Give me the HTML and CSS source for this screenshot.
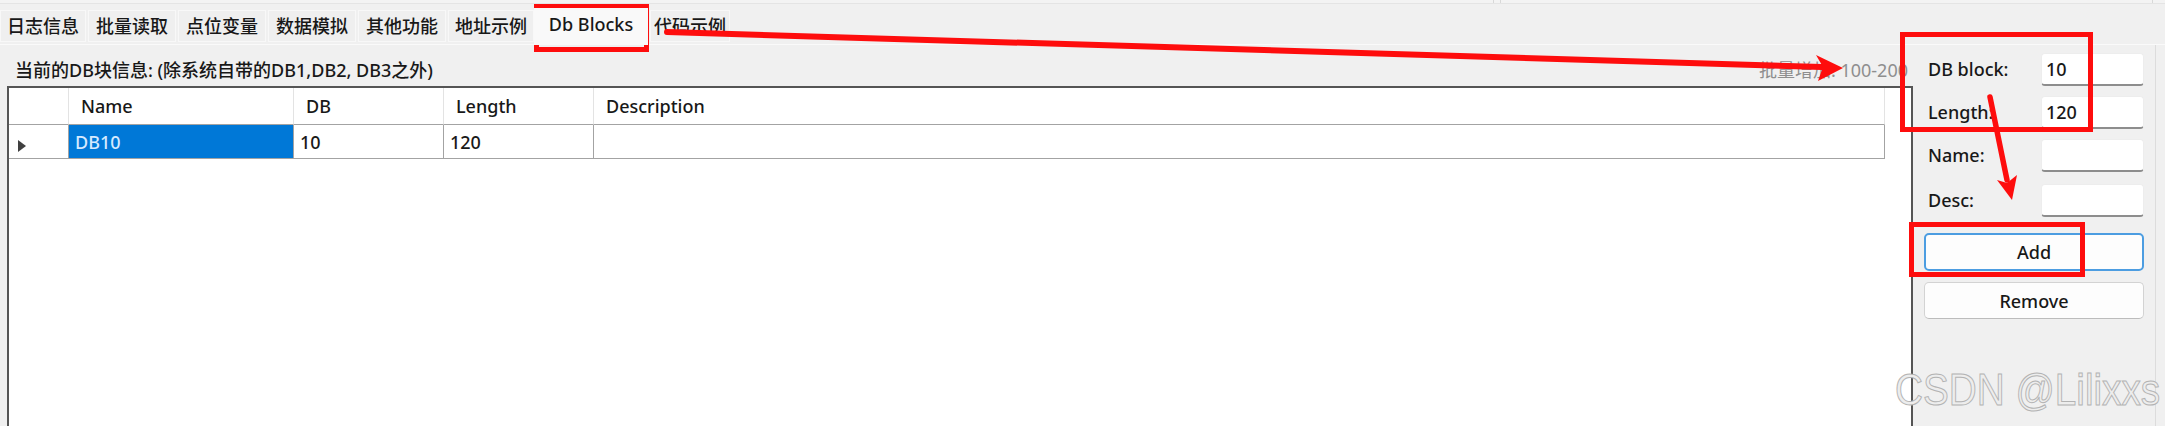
FILE: index.html
```html
<!DOCTYPE html>
<html lang="zh-CN">
<head>
<meta charset="utf-8">
<title>Db Blocks</title>
<link rel="stylesheet" href="styles.css">
</head>
<body>
<div class="app">
  <div class="topstrip"><div class="seg seg-a"></div><div class="seg seg-b"></div></div>
  <div class="tabs">
    <div class="tab t-first">日志信息</div>
    <div class="tab">批量读取</div>
    <div class="tab">点位变量</div>
    <div class="tab">数据模拟</div>
    <div class="tab">其他功能</div>
    <div class="tab t-narrow">地址示例</div>
    <div class="tab active">Db Blocks</div>
    <div class="tab t-last">代码示例</div>
  </div>
  <div class="page">
    <div class="main">
      <div class="caption">
        <span>当前的DB块信息: (除系统自带的DB1,DB2, DB3之外)</span>
        <span class="muted">批量增加: 100-200</span>
      </div>
      <div class="grid">
        <div class="row head">
          <div class="cell rh"></div>
          <div class="cell c-name">Name</div>
          <div class="cell c-db">DB</div>
          <div class="cell c-len">Length</div>
          <div class="cell c-desc">Description</div>
        </div>
        <div class="row data">
          <div class="cell rh"><span class="cur"></span></div>
          <div class="cell c-name sel">DB10</div>
          <div class="cell c-db">10</div>
          <div class="cell c-len">120</div>
          <div class="cell c-desc"></div>
        </div>
      </div>
    </div>
    <div class="side">
      <div class="field"><span class="lbl">DB block:</span><span class="input">10</span></div>
      <div class="field"><span class="lbl">Length:</span><span class="input">120</span></div>
      <div class="field"><span class="lbl">Name:</span><span class="input"></span></div>
      <div class="field f-last"><span class="lbl">Desc:</span><span class="input"></span></div>
      <div class="btn primary">Add</div>
      <div class="btn">Remove</div>
    </div>
    <div class="edge"></div>
  </div>

  <svg class="annot" width="2165" height="426" viewBox="0 0 2165 426" xmlns="http://www.w3.org/2000/svg">
    <g fill="none" stroke="#fe0d0d">
      <rect x="536.5" y="6.5" width="110" height="43" stroke-width="5"/>
      <rect x="1902.5" y="34.5" width="188" height="95" stroke-width="5"/>
      <rect x="1911.5" y="224.5" width="171" height="50" stroke-width="5"/>
      <line x1="667" y1="32" x2="1822" y2="67" stroke-width="6" stroke-linecap="round"/>
      <line x1="1990" y1="97" x2="2007" y2="180" stroke-width="5.5" stroke-linecap="round"/>
    </g>
    <g fill="#fe0d0d">
      <polygon points="1843,68 1816,55 1823,67 1818,81"/>
      <polygon points="2012,200 1997,180 2007,183 2017,175"/>
    </g>
  </svg>

  <div class="watermark">CSDN @Lilixxs</div>
</div>
</body>
</html>
```

FILE: styles.css
```css
html, body {
  margin: 0;
  padding: 0;
}

body {
  width: 2165px;
  height: 426px;
  overflow: hidden;
  background: #f0f0f0;
  font-family: "Noto Sans", "Noto Sans CJK SC", sans-serif;
  font-size: 18px;
  font-weight: 500;
  color: #181818;
}

.app {
  position: relative;
  width: 2165px;
  height: 426px;
  display: flex;
  flex-direction: column;
}

/* ---------- top strip ---------- */
.topstrip {
  height: 3px;
  display: flex;
  border-bottom: 1px solid #e4e4e4;
  background: #f3f3f3;
}

.seg {
  height: 3px;
  box-sizing: border-box;
}

.seg-a {
  width: 1494px;
  border-right: 1px solid #d8d8d8;
}

.seg-b {
  width: 653px;
  margin-left: 6px;
  border-left: 1px solid #d8d8d8;
  border-right: 1px solid #d8d8d8;
}

/* ---------- tabs ---------- */
.tabs {
  height: 40px;
  box-sizing: border-box;
  padding-top: 6px;
  display: flex;
  align-items: flex-start;
  gap: 2px;
}

.tab {
  width: 88px;
  height: 32px;
  line-height: 32px;
  text-align: center;
  background: #efefef;
  box-shadow: inset 0 0 0 1px #f8f8f8;
  white-space: nowrap;
}

.t-first {
  width: 86px;
}

.t-narrow {
  width: 86px;
}

.tab.active {
  position: relative;
  z-index: 1;
  width: 114px;
  height: 37px;
  margin-top: -2px;
  margin-left: -2px;
  padding-bottom: 5px;
  box-sizing: border-box;
  background: #f9f9f9;
  box-shadow: none;
}

.t-last {
  width: 80px;
}

/* ---------- page ---------- */
.page {
  flex: 1;
  min-height: 0;
  display: flex;
  border-top: 1px solid #fafafa;
}

.main {
  width: 1913px;
  flex: none;
  padding-left: 7px;
  box-sizing: border-box;
  display: flex;
  flex-direction: column;
}

.caption {
  height: 41px;
  box-sizing: border-box;
  padding: 0 5px 4px 8px;
  display: flex;
  align-items: flex-end;
  justify-content: space-between;
  line-height: 24px;
  white-space: nowrap;
}

.muted {
  color: #8e8e8e;
  font-weight: 400;
}

/* ---------- grid ---------- */
.grid {
  flex: 1;
  background: #ffffff;
  border: 2px solid #555555;
  border-bottom: none;
}

.row {
  display: flex;
}

.cell {
  box-sizing: border-box;
  flex: none;
  white-space: nowrap;
}

.head .cell {
  height: 37px;
  line-height: 36px;
  padding-left: 12px;
  border-bottom: 1px solid #a3a3a3;
  border-right: 1px solid #e3e3e3;
}

.data .cell {
  height: 34px;
  line-height: 34px;
  padding-left: 6px;
  border-bottom: 1px solid #a3a3a3;
  border-right: 1px solid #a3a3a3;
}

.rh {
  width: 60px;
}

.c-name {
  width: 225px;
}

.c-db {
  width: 150px;
}

.c-len {
  width: 150px;
}

.c-desc {
  width: 1291px;
}

.data .rh {
  display: flex;
  align-items: center;
  padding-left: 9px;
}

.cur {
  width: 0;
  height: 0;
  margin-top: 9px;
  border-left: 8px solid #404040;
  border-top: 6px solid transparent;
  border-bottom: 6px solid transparent;
}

.data .sel {
  background: #0078d7;
  color: #d6eaff;
}

/* ---------- side panel ---------- */
.side {
  width: 243px;
  flex: none;
  box-sizing: border-box;
  border-right: 1px solid #dcdcdc;
  padding: 8px 0 0 11px;
  display: flex;
  flex-direction: column;
}

.field {
  display: grid;
  grid-template-columns: 117px 103px;
  height: 33px;
  margin-bottom: 10px;
}

.f-last {
  margin-top: 2px;
}

.lbl {
  padding-left: 4px;
  line-height: 33px;
  white-space: nowrap;
}

.input {
  box-sizing: border-box;
  background: #ffffff;
  border: 1px solid #ededed;
  border-bottom: 2px solid #8d8d8d;
  border-radius: 4px;
  padding-left: 4px;
  line-height: 30px;
}

.btn {
  width: 220px;
  height: 37px;
  box-sizing: border-box;
  border: 1px solid #d3d3d3;
  border-bottom-color: #bcbcbc;
  border-radius: 5px;
  background: #fdfdfd;
  display: flex;
  align-items: center;
  justify-content: center;
}

.btn.primary {
  height: 38px;
  margin-top: 6px;
  margin-bottom: 11px;
  border: 2px solid #4c9de1;
}

.edge {
  flex: 1;
}

/* ---------- overlays ---------- */
.annot {
  position: absolute;
  left: 0;
  top: 0;
  pointer-events: none;
}

.watermark {
  position: absolute;
  left: 1895px;
  top: 368px;
  font-family: "Liberation Sans", Arial, sans-serif;
  font-size: 44px;
  font-weight: 400;
  line-height: 44px;
  color: #ededed;
  -webkit-text-stroke: 1px #b3b3b3;
  transform: scaleX(0.88);
  transform-origin: left top;
  white-space: nowrap;
  pointer-events: none;
}
```
